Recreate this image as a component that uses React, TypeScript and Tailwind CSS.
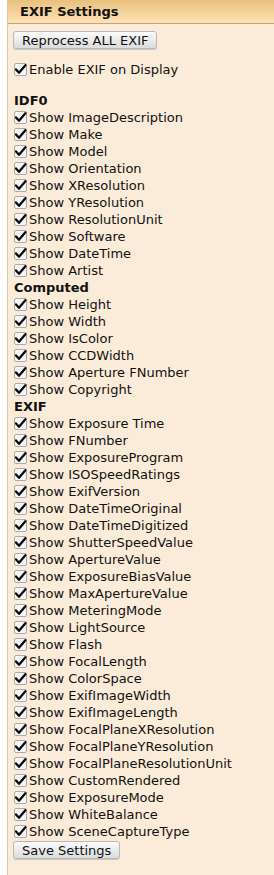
import React from "react";

const Check = () => (
  <svg width="13" height="13" viewBox="0 0 13 13" className="shrink-0 overflow-visible">
    <rect x="0.5" y="0.5" width="12" height="12" rx="1.5" fill="#f6f6f6" stroke="#aaaaaa" />
    <path d="M2 6.4 L5 9.8 L11.4 2.2" fill="none" stroke="#0a0a0a" strokeWidth="2.3" strokeLinecap="round" strokeLinejoin="round" />
  </svg>
);

const Row = ({ label }: { label: string }) => (
  <div className="flex items-center h-[17px] gap-[2px]">
    <Check />
    <span className="whitespace-nowrap">{label}</span>
  </div>
);

const Heading = ({ label }: { label: string }) => (
  <div className="h-[17px] flex items-center font-bold">{label}</div>
);

const Btn = ({ label }: { label: string }) => (
  <button className="h-[18px] px-[8px] border border-[#b8b8b8] rounded-[3px] bg-gradient-to-b from-[#fbfbfb] to-[#dcdcdc] text-[13px] leading-none text-[#111] shadow-[0_1px_0_#c8c8c8]">
    {label}
  </button>
);

const idf0 = [
  "Show ImageDescription",
  "Show Make",
  "Show Model",
  "Show Orientation",
  "Show XResolution",
  "Show YResolution",
  "Show ResolutionUnit",
  "Show Software",
  "Show DateTime",
  "Show Artist",
];
const computed = [
  "Show Height",
  "Show Width",
  "Show IsColor",
  "Show CCDWidth",
  "Show Aperture FNumber",
  "Show Copyright",
];
const exif = [
  "Show Exposure Time",
  "Show FNumber",
  "Show ExposureProgram",
  "Show ISOSpeedRatings",
  "Show ExifVersion",
  "Show DateTimeOriginal",
  "Show DateTimeDigitized",
  "Show ShutterSpeedValue",
  "Show ApertureValue",
  "Show ExposureBiasValue",
  "Show MaxApertureValue",
  "Show MeteringMode",
  "Show LightSource",
  "Show Flash",
  "Show FocalLength",
  "Show ColorSpace",
  "Show ExifImageWidth",
  "Show ExifImageLength",
  "Show FocalPlaneXResolution",
  "Show FocalPlaneYResolution",
  "Show FocalPlaneResolutionUnit",
  "Show CustomRendered",
  "Show ExposureMode",
  "Show WhiteBalance",
  "Show SceneCaptureType",
];

export default function App() {
  return (
    <div
      className="w-[274px] h-[875px] bg-white flex text-[13px] text-[#111]"
      style={{ fontFamily: "'DejaVu Sans', Verdana, sans-serif" }}
    >
      <div className="w-[7px] shrink-0 bg-white" />
      <div className="flex-1 border-l border-[#e3caa0] bg-[#fbecd9] flex flex-col">
        <div className="h-[24px] shrink-0 border-b border-[#c9a27e] bg-gradient-to-b from-[#e9c07c] to-[#fde3b6] flex items-center pl-[12px] font-bold text-[13px]">
          EXIF Settings
        </div>
        <div className="pl-[5px] pt-[7px] flex flex-col">
          <div className="flex">
            <Btn label="Reprocess ALL EXIF" />
          </div>
          <div className="mt-[12px] pl-[1px]">
            <Row label="Enable EXIF on Display" />
          </div>
          <div className="mt-[14px] pl-[1px]">
            <Heading label="IDF0" />
            {idf0.map((l) => (
              <Row key={l} label={l} />
            ))}
            <Heading label="Computed" />
            {computed.map((l) => (
              <Row key={l} label={l} />
            ))}
            <Heading label="EXIF" />
            {exif.map((l) => (
              <Row key={l} label={l} />
            ))}
          </div>
          <div className="flex mt-[1px]">
            <Btn label="Save Settings" />
          </div>
        </div>
      </div>
    </div>
  );
}
